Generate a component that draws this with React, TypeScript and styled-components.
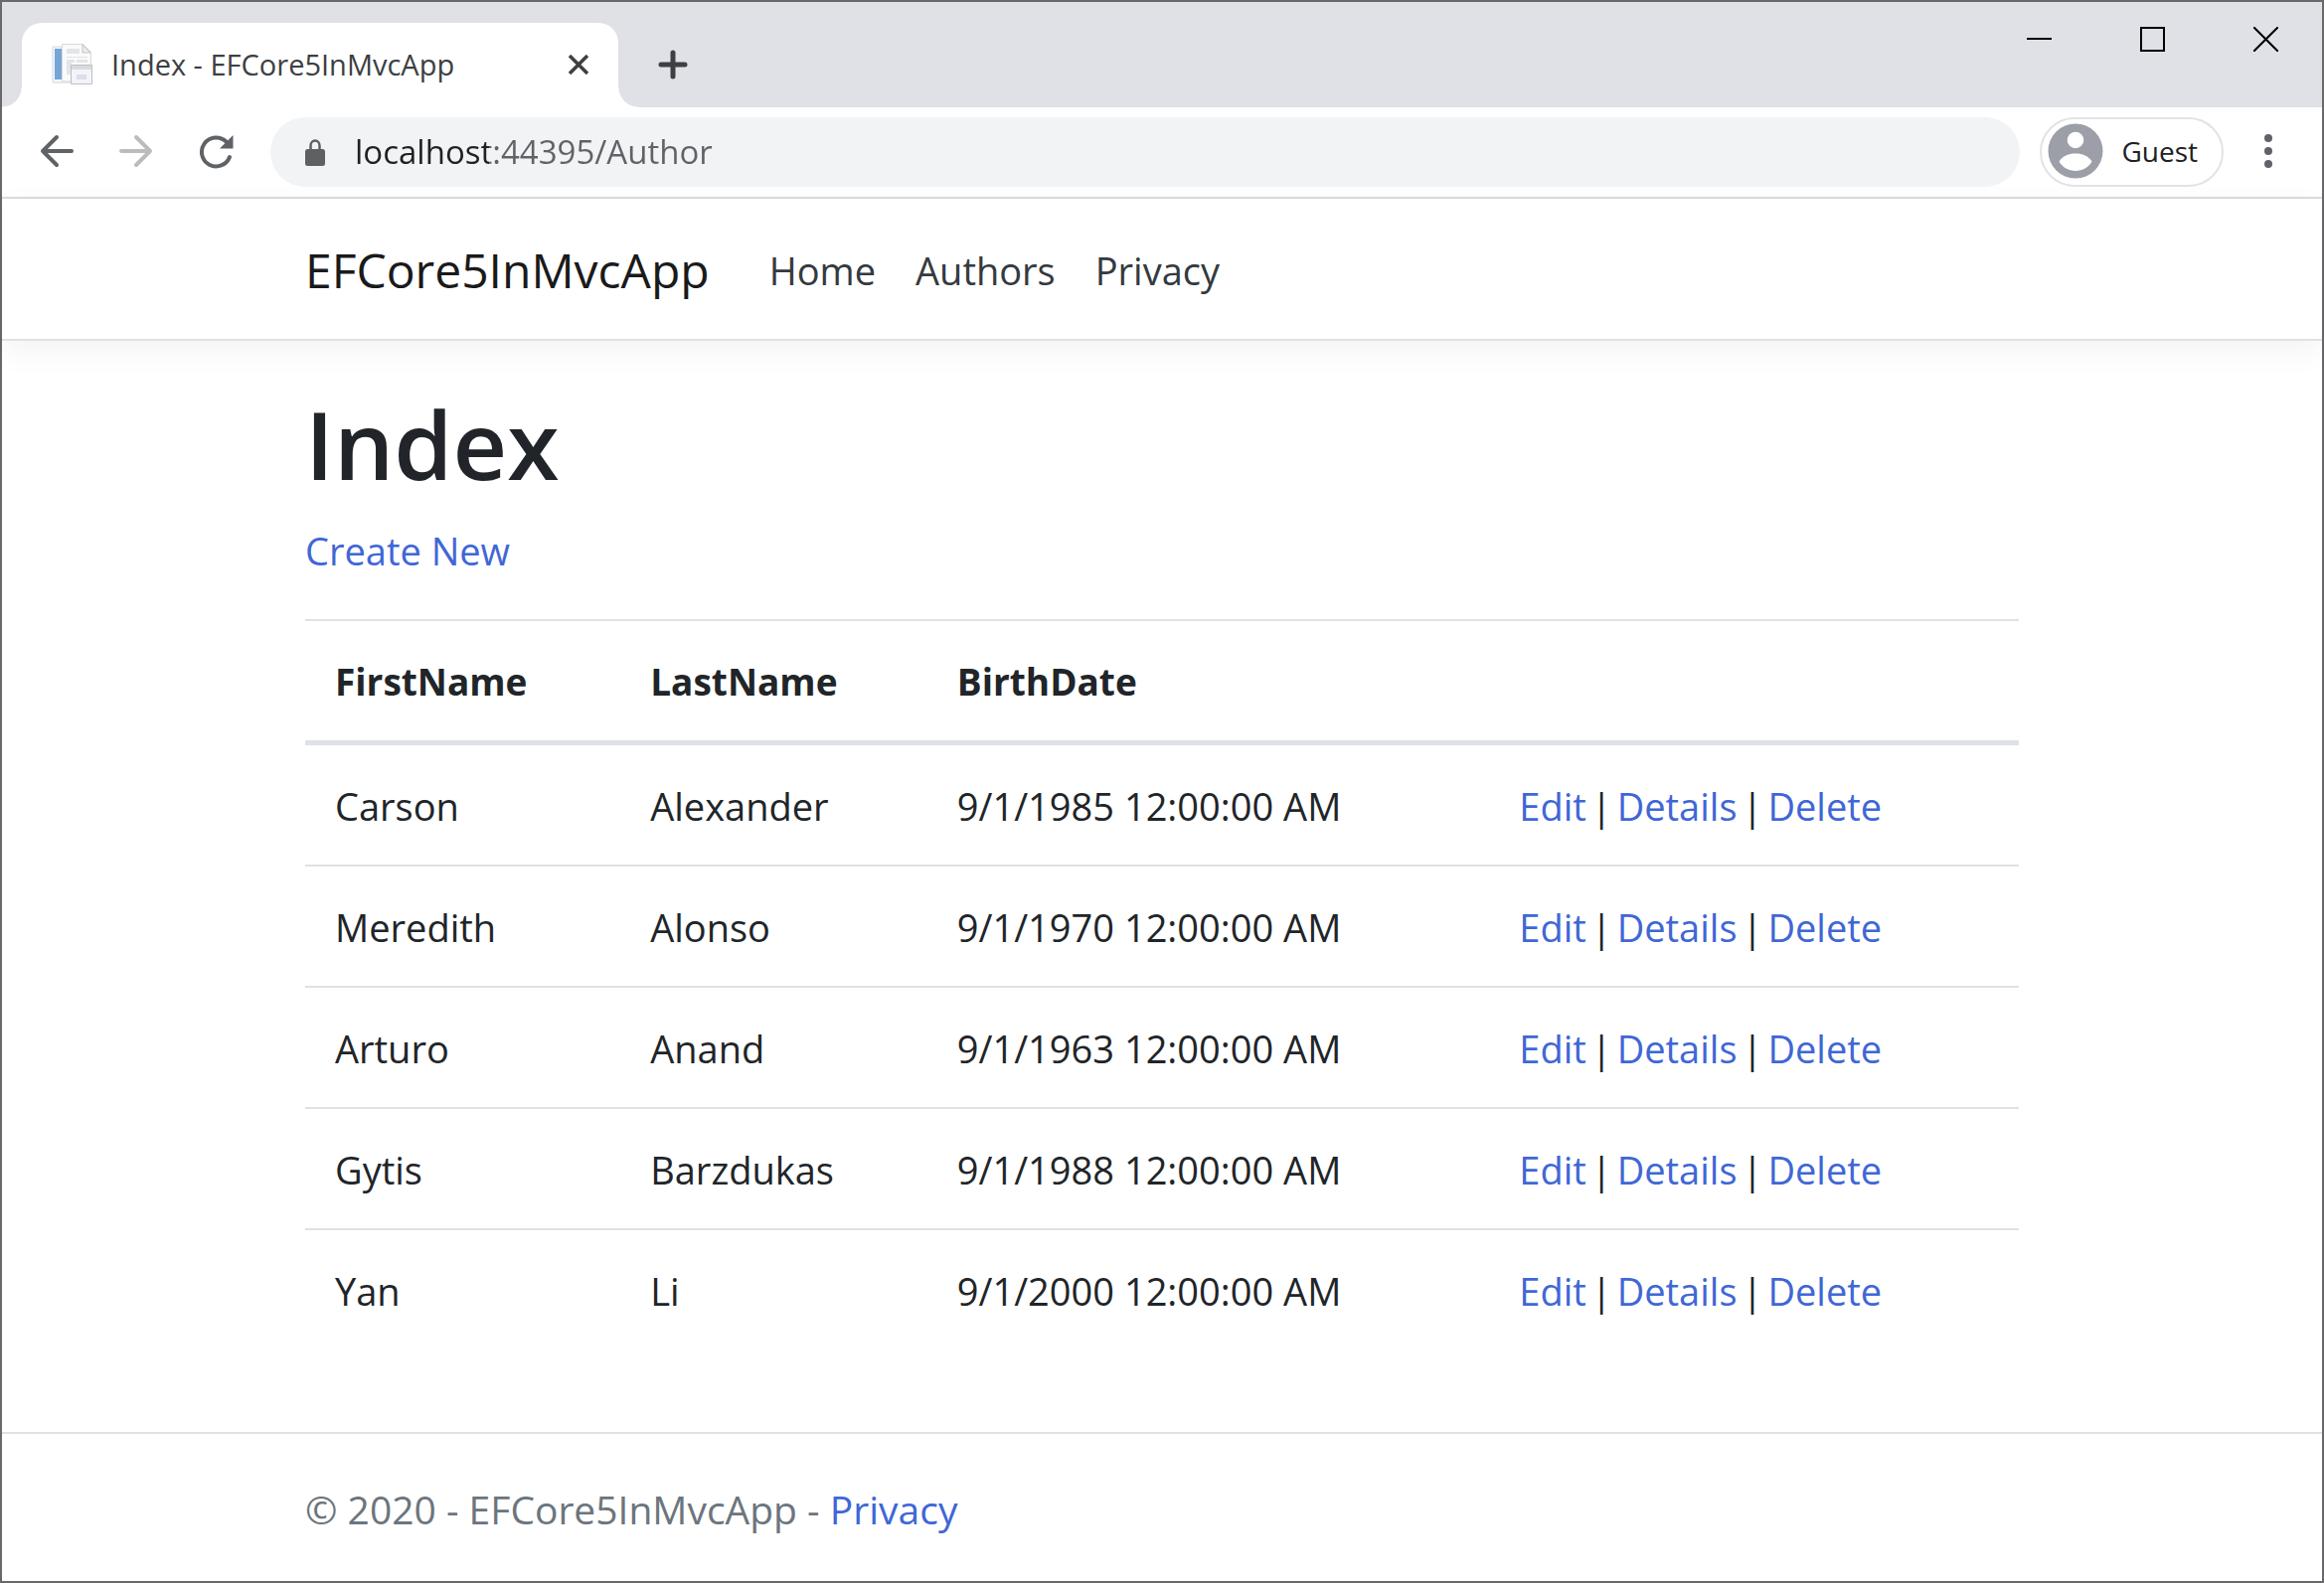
import React from "react";
import styled, { createGlobalStyle } from "styled-components";

const GlobalStyle = createGlobalStyle`
  *, *::before, *::after { box-sizing: border-box; }
  body {
    margin: 0;
    background: #fff;
    color: #212529;
    font-family: "Segoe UI", "Open Sans", "Noto Sans", sans-serif;
    font-size: 38px;
    line-height: 60px;
  }
  button {
    padding: 0;
    border: 0;
    background: none;
    color: inherit;
    font: inherit;
    cursor: pointer;
  }
  svg { display: block; flex: none; }
`;

const BrowserWindow = styled.div`
  display: flex;
  flex-direction: column;
  min-height: 100vh;
  border: 2px solid #69696b;
`;

const TabStrip = styled.div`
  display: flex;
  justify-content: space-between;
  height: 106px;
  padding-left: 20px;
  background: #dfe1e6;
`;

const Tabs = styled.div`
  display: flex;
  align-items: flex-end;
`;

const Tab = styled.div`
  position: relative;
  display: flex;
  align-items: center;
  width: 600px;
  height: 85px;
  padding: 0 25px 2px 30px;
  border-radius: 20px 20px 0 0;
  background: #fff;

  &::before,
  &::after {
    content: "";
    position: absolute;
    bottom: 0;
    width: 20px;
    height: 20px;
  }
  &::before {
    right: 100%;
    background: radial-gradient(circle at 0 0, transparent 19px, #fff 20px);
  }
  &::after {
    left: 100%;
    background: radial-gradient(circle at 100% 0, transparent 19px, #fff 20px);
  }
`;

const TabTitle = styled.span`
  flex: 1;
  padding-left: 18px;
  color: #3c4043;
  font-size: 29px;
  line-height: 40px;
`;

const IconButton = styled.button<{ $width: number; $height: number }>`
  display: flex;
  flex: none;
  align-items: center;
  justify-content: center;
  width: ${(p) => p.$width}px;
  height: ${(p) => p.$height}px;
`;

const ToolButton = styled(IconButton)<{ $dim?: boolean }>`
  padding-bottom: 2px;
  color: ${(p) => (p.$dim ? "#babcbe" : "#5f6368")};
`;

const NewTab = styled(IconButton)`
  margin-left: 26px;
`;

const WindowControls = styled.div`
  display: flex;
`;

const Toolbar = styled.div`
  display: flex;
  align-items: center;
  height: 92px;
  padding: 0 19px 0 15px;
  border-bottom: 2px solid #dadce0;
`;

const AddressBar = styled.form`
  display: flex;
  flex: 1;
  align-items: center;
  gap: 30px;
  height: 70px;
  margin: 0 20px 0 15px;
  padding: 0 35px;
  border-radius: 35px;
  background: #f1f3f4;
`;

const AddressInput = styled.input`
  flex: 1;
  min-width: 0;
  padding: 0;
  border: 0;
  outline: 0;
  background: linear-gradient(to right, #202124 135px, #5f6368 135px);
  -webkit-background-clip: text;
  background-clip: text;
  color: #5f6368;
  -webkit-text-fill-color: transparent;
  font: inherit;
  font-size: 33px;
  line-height: 50px;
`;

const Profile = styled.button`
  display: flex;
  align-items: center;
  gap: 18px;
  height: 70px;
  margin-right: 10px;
  padding: 0 24px 2px 6px;
  border: 2px solid #e2e3e4;
  border-radius: 35px;
  color: #202124;
  font-size: 28px;
  line-height: 40px;
`;

const Container = styled.div`
  width: 100%;
  max-width: 1724px;
  margin: 0 auto;
`;

const SiteHeader = styled.header`
  padding: 34px 0 32px;
  border-bottom: 2px solid #dee2e6;
  box-shadow: 0 10px 30px rgba(0, 0, 0, 0.05);
`;

const NavRow = styled(Container)`
  display: flex;
  align-items: center;
  gap: 60px;
`;

const Brand = styled.a`
  color: #1a1a1a;
  font-size: 48px;
  line-height: 75px;
  text-decoration: none;
`;

const NavLinks = styled.nav`
  display: flex;
  gap: 40px;
`;

const NavLink = styled.a`
  color: #343a40;
  text-decoration: none;
`;

const Main = styled.main`
  flex: 1;
  padding: 43px 0;
`;

const Title = styled.h1`
  margin: 0 0 18px;
  font-size: 95px;
  font-weight: 600;
  line-height: 120px;
`;

const Actions = styled.p`
  margin: 0 0 39px;
`;

const Link = styled.a`
  color: #3f67d6;
  text-decoration: none;
`;

const Table = styled.table`
  width: 100%;
  border-collapse: separate;
  border-spacing: 0;
  table-layout: fixed;
`;

const Column = styled.col<{ $share: number }>`
  width: ${(p) => p.$share}%;
`;

const HeadCell = styled.th`
  padding: 31px 30px 29px;
  border-top: 2px solid #dee2e6;
  border-bottom: 5px solid #dee2e6;
  font-size: 37px;
  font-weight: 700;
  text-align: left;
`;

const Row = styled.tr`
  & + & > td { border-top: 2px solid #dee2e6; }
`;

const Cell = styled.td`
  padding: 31px 30px 29px;
  white-space: nowrap;
`;

const RowActions = styled.div`
  display: flex;
  gap: 5px;
`;

const SiteFooter = styled.footer`
  padding: 46px 0 42px;
  border-top: 2px solid #dee2e6;
  color: #6c757d;
  font-size: 39px;
`;

const authors = [
  { first: "Carson", last: "Alexander", born: "9/1/1985 12:00:00 AM" },
  { first: "Meredith", last: "Alonso", born: "9/1/1970 12:00:00 AM" },
  { first: "Arturo", last: "Anand", born: "9/1/1963 12:00:00 AM" },
  { first: "Gytis", last: "Barzdukas", born: "9/1/1988 12:00:00 AM" },
  { first: "Yan", last: "Li", born: "9/1/2000 12:00:00 AM" },
];

const Favicon = () => (
  <svg width="42" height="42" viewBox="0 0 42 42" aria-hidden="true">
    <path d="M1 3h22v36H1z" fill="#f5f8fb" stroke="#d3d6d9" />
    <path d="M3 5h7v31H3z" fill="#76a5d8" />
    <path d="M10.500 .5h21l8 8V38h-29z" fill="#fafafa" stroke="#d8d9da" />
    <path d="M31 1v8h8z" fill="#eceded" stroke="#c3c4c6" />
    <path d="M15 5h13v5H15zM15 13h21v1H15zM15 16h8v3h-8zM15 19h5v12h-5zM25 16h11v3H25z" fill="#e2e5ea" />
    <path d="M19.500 21.500h21v19h-21z" fill="#f3f4fa" stroke="#bfc0c3" />
    <path d="M20 22h20v4H20z" fill="#d9dadc" />
    <path d="M25 31h10v5H25z" fill="#dcdee8" />
  </svg>
);

const BackIcon = () => (
  <svg width="34" height="34" viewBox="0 0 34 34" fill="none" stroke="currentColor" strokeWidth="4" strokeLinecap="round" strokeLinejoin="round" aria-hidden="true">
    <path d="M17 3 3 17l14 14M3 17h29" />
  </svg>
);

const ForwardIcon = () => (
  <svg width="34" height="34" viewBox="0 0 34 34" fill="none" stroke="currentColor" strokeWidth="4" strokeLinecap="round" strokeLinejoin="round" aria-hidden="true">
    <path d="M17 3l14 14-14 14M31 17H2" />
  </svg>
);

const ReloadIcon = () => (
  <svg width="36" height="36" viewBox="0 0 36 36" aria-hidden="true">
    <path d="M32 24A14.500 14.500 0 1 1 28.500 8.500" fill="none" stroke="currentColor" strokeWidth="4" strokeLinecap="round" />
    <path d="M35.500 2v13.500H22z" fill="currentColor" />
  </svg>
);

const LockIcon = () => (
  <svg width="20" height="27" viewBox="0 0 20 27" aria-hidden="true">
    <path d="M5.500 11V6.500a4.500 5 0 0 1 9 0V11" fill="none" stroke="#5f6062" strokeWidth="2.500" />
    <rect y="10" width="20" height="17" rx="2.500" fill="#5f6062" />
  </svg>
);

const Avatar = () => (
  <svg width="56" height="56" viewBox="0 0 56 56" aria-hidden="true">
    <circle cx="28" cy="28" r="27.500" fill="#9c9fa7" />
    <circle cx="28" cy="17" r="8.300" fill="#fff" />
    <path d="M11.500 38.500C15 33 21 30.500 28 30.500s13 2.500 16.500 8C41 44.500 35 48 28 48s-13-3.500-16.500-9.500z" fill="#fff" />
  </svg>
);

export default function App() {
  return (
    <>
      <GlobalStyle />
      <BrowserWindow>
        <TabStrip>
          <Tabs>
            <Tab>
              <Favicon />
              <TabTitle>Index - EFCore5InMvcApp</TabTitle>
              <IconButton $width={30} $height={40} aria-label="Close tab">
                <svg width="22" height="22" viewBox="0 0 22 22" stroke="#3c4043" strokeWidth="3.500" aria-hidden="true">
                  <path d="M2 2l18 18M20 2 2 20" />
                </svg>
              </IconButton>
            </Tab>
            <NewTab $width={58} $height={87} aria-label="New tab">
              <svg width="30" height="30" viewBox="0 0 30 30" stroke="#3c4043" strokeWidth="5" strokeLinecap="round" aria-hidden="true">
                <path d="M15 3v24M3 15h24" />
              </svg>
            </NewTab>
          </Tabs>
          <WindowControls>
            <IconButton $width={114} $height={75} aria-label="Minimize">
              <svg width="25" height="25" viewBox="0 0 25 25" aria-hidden="true">
                <path d="M0 11h25v2H0z" />
              </svg>
            </IconButton>
            <IconButton $width={114} $height={75} aria-label="Maximize">
              <svg width="25" height="25" viewBox="0 0 25 25" fill="none" stroke="#000" strokeWidth="2" aria-hidden="true">
                <path d="M1 1h23v23H1z" />
              </svg>
            </IconButton>
            <IconButton $width={114} $height={75} aria-label="Close window">
              <svg width="25" height="25" viewBox="0 0 25 25" stroke="#000" strokeWidth="2" aria-hidden="true">
                <path d="M0 0l25 25M25 0 0 25" />
              </svg>
            </IconButton>
          </WindowControls>
        </TabStrip>

        <Toolbar>
          <ToolButton $width={80} $height={70} aria-label="Back"><BackIcon /></ToolButton>
          <ToolButton $width={80} $height={70} $dim aria-label="Forward"><ForwardIcon /></ToolButton>
          <ToolButton $width={80} $height={70} aria-label="Reload"><ReloadIcon /></ToolButton>
          <AddressBar onSubmit={(e) => e.preventDefault()}>
            <LockIcon />
            <AddressInput aria-label="Address" defaultValue="localhost:44395/Author" spellCheck={false} />
          </AddressBar>
          <Profile>
            <Avatar />
            Guest
          </Profile>
          <ToolButton $width={70} $height={70} aria-label="Menu">
            <svg width="8" height="34" viewBox="0 0 8 34" fill="currentColor" aria-hidden="true">
              <circle cx="4" cy="4" r="4" />
              <circle cx="4" cy="17" r="4" />
              <circle cx="4" cy="30" r="4" />
            </svg>
          </ToolButton>
        </Toolbar>

        <SiteHeader>
          <NavRow>
            <Brand href="#">EFCore5InMvcApp</Brand>
            <NavLinks>
              <NavLink href="#home">Home</NavLink>
              <NavLink href="#authors">Authors</NavLink>
              <NavLink href="#privacy">Privacy</NavLink>
            </NavLinks>
          </NavRow>
        </SiteHeader>

        <Main>
          <Container>
            <Title>Index</Title>
            <Actions>
              <Link href="#create">Create New</Link>
            </Actions>
            <Table>
              <colgroup>
                <Column $share={18.4} />
                <Column $share={17.9} />
                <Column $share={32.8} />
                <Column $share={30.9} />
              </colgroup>
              <thead>
                <tr>
                  <HeadCell scope="col">FirstName</HeadCell>
                  <HeadCell scope="col">LastName</HeadCell>
                  <HeadCell scope="col">BirthDate</HeadCell>
                  <HeadCell />
                </tr>
              </thead>
              <tbody>
                {authors.map((a) => (
                  <Row key={a.last}>
                    <Cell>{a.first}</Cell>
                    <Cell>{a.last}</Cell>
                    <Cell>{a.born}</Cell>
                    <Cell>
                      <RowActions>
                        <Link href="#edit">Edit</Link>
                        <span>|</span>
                        <Link href="#details">Details</Link>
                        <span>|</span>
                        <Link href="#delete">Delete</Link>
                      </RowActions>
                    </Cell>
                  </Row>
                ))}
              </tbody>
            </Table>
          </Container>
        </Main>

        <SiteFooter>
          <Container>
            © 2020 - EFCore5InMvcApp - <Link href="#privacy">Privacy</Link>
          </Container>
        </SiteFooter>
      </BrowserWindow>
    </>
  );
}
